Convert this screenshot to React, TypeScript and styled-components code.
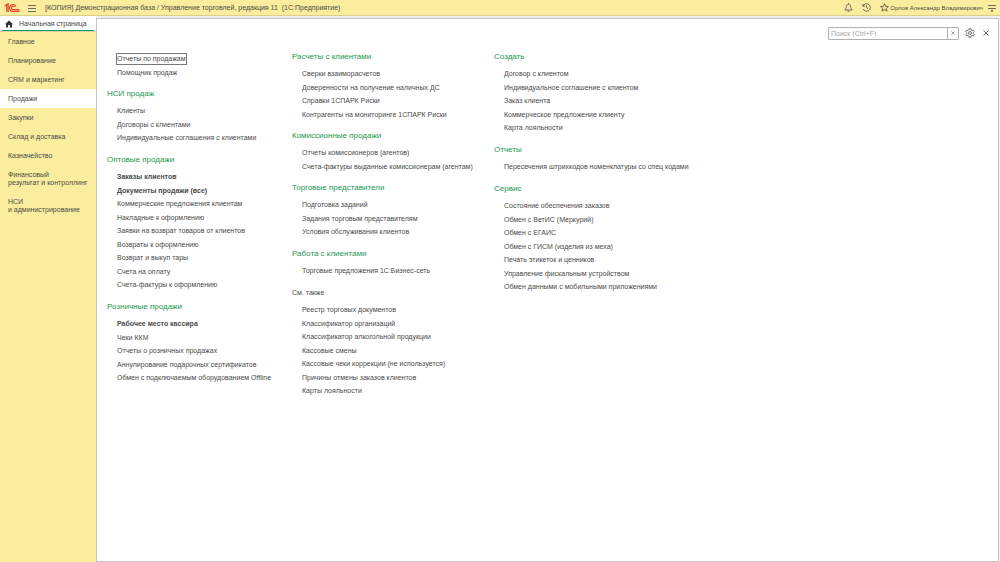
import React from "react";
import styled, { createGlobalStyle, css } from "styled-components";

const GlobalStyle = createGlobalStyle`
  * { box-sizing: border-box; }
  body {
    margin: 0;
    background: #f0f0f0;
    color: #4a4a4a;
    font: 7px/14px "Liberation Sans", Arial, sans-serif;
  }
  ul { list-style: none; margin: 0; padding: 0; }
  a { color: inherit; text-decoration: none; }
  button { padding: 0; border: 0; background: none; color: inherit; font: inherit; cursor: pointer; }
`;

const Shell = styled.div`
  display: flex;
  flex-direction: column;
  min-height: 100vh;
`;

const TitleBar = styled.header`
  display: flex;
  align-items: center;
  height: 16px;
  padding: 0 3px 0 4px;
  background: #fbed9e;
  border-bottom: 1px solid #dccf8c;
`;

const Title = styled.h1`
  flex: 1;
  margin: 0 0 0 8px;
  font-size: 7px;
  line-height: 14px;
  font-weight: 400;
  white-space: pre;
`;

const Tools = styled.div`
  display: flex;
  align-items: center;
  gap: 8px;
`;

const IconButton = styled.button`
  display: grid;
  place-items: center;
  width: 10px;
  height: 14px;
  svg { display: block; }
`;

const MenuButton = styled(IconButton)`
  margin-left: 7px;
`;

const UserArea = styled.div`
  display: flex;
  align-items: center;
  gap: 4px;
  margin-left: -7px;
`;

const UserLink = styled.a`
  font-size: 6px;
  white-space: nowrap;
`;

const Body = styled.div`
  display: flex;
  flex: 1;
`;

const Sidebar = styled.aside`
  flex: none;
  width: 96px;
  background: #fbed9e;
`;

const HomeTab = styled.a`
  display: block;
  height: 16px;
  padding: 0 2px;
  background: #fff;
  border-bottom: 1px solid #d5d0b0;
`;

const HomeInner = styled.span`
  display: flex;
  align-items: center;
  gap: 6px;
  height: 15px;
  padding: 1px 3px 0;
  border-bottom: 1px solid #0f9d58;
  white-space: nowrap;
`;

const SectionLink = styled.a<{ $active?: boolean }>`
  display: block;
  padding: 6px 8px 5px;
  line-height: 8px;
  white-space: pre-line;
  background: ${(p) => (p.$active ? "#fff" : "transparent")};
`;

const Panel = styled.main`
  flex: 1;
  margin: 2px 1px 0 0;
  padding: 7px 7px 0 10px;
  background: #fff;
  border: 1px solid #c4c4c4;
`;

const PanelBar = styled.div`
  display: flex;
  justify-content: flex-end;
  align-items: center;
  gap: 6px;
`;

const SearchBox = styled.div`
  display: flex;
  width: 131px;
  height: 13px;
  border: 1px solid #b0b0b0;
  border-radius: 1px;
`;

const SearchInput = styled.input`
  flex: 1;
  min-width: 0;
  padding: 1px 2px 0;
  border: 0;
  outline: 0;
  font: inherit;
  line-height: 10px;
  &::placeholder { color: #a8a8a8; opacity: 1; }
`;

const ClearButton = styled.button`
  width: 11px;
  border-left: 1px solid #b0b0b0;
  display: grid;
  place-items: center;
`;

const Columns = styled.div`
  display: grid;
  grid-template-columns: 185px 202px auto;
  padding-top: 10px;
`;

const Group = styled.section`
  margin-bottom: 8px;
`;

const GroupTitle = styled.h2<{ $muted?: boolean }>`
  margin: 0 0 3px;
  font-size: 8px;
  line-height: 14px;
  font-weight: 400;
  color: #1a9850;
  ${(p) => p.$muted && css`font-size: 7px; color: #4a4a4a;`}
`;

const Items = styled.ul`
  padding-left: 10px;
  &:first-child { padding-top: 2px; }
`;

const Item = styled.li`
  height: 14px;
  white-space: nowrap;
  &:nth-child(even) { height: 13px; }
`;

const ItemLink = styled.a<{ $bold?: boolean; $focused?: boolean }>`
  font-weight: ${(p) => (p.$bold ? 700 : 400)};
  ${(p) => p.$focused && css`
    display: inline-block;
    line-height: 10px;
    outline: 1px solid #777;
  `}
`;

type GroupData = { title?: string; muted?: boolean; bold?: number; focusFirst?: boolean; items: string[] };

const columns: GroupData[][] = [
  [
    { focusFirst: true, items: ["Отчеты по продажам", "Помощник продаж"] },
    { title: "НСИ продаж", items: ["Клиенты", "Договоры с клиентами", "Индивидуальные соглашения с клиентами"] },
    {
      title: "Оптовые продажи",
      bold: 2,
      items: [
        "Заказы клиентов",
        "Документы продажи (все)",
        "Коммерческие предложения клиентам",
        "Накладные к оформлению",
        "Заявки на возврат товаров от клиентов",
        "Возвраты к оформлению",
        "Возврат и выкуп тары",
        "Счета на оплату",
        "Счета-фактуры к оформлению",
      ],
    },
    {
      title: "Розничные продажи",
      bold: 1,
      items: [
        "Рабочее место кассира",
        "Чеки ККМ",
        "Отчеты о розничных продажах",
        "Аннулирование подарочных сертификатов",
        "Обмен с подключаемым оборудованием Offline",
      ],
    },
  ],
  [
    {
      title: "Расчеты с клиентами",
      items: [
        "Сверки взаиморасчетов",
        "Доверенности на получение наличных ДС",
        "Справки 1СПАРК Риски",
        "Контрагенты на мониторинге 1СПАРК Риски",
      ],
    },
    {
      title: "Комиссионные продажи",
      items: ["Отчеты комиссионеров (агентов)", "Счета-фактуры выданные комиссионерам (агентам)"],
    },
    {
      title: "Торговые представители",
      items: ["Подготовка заданий", "Задания торговым представителям", "Условия обслуживания клиентов"],
    },
    { title: "Работа с клиентами", items: ["Торговые предложения 1С:Бизнес-сеть"] },
    {
      title: "См. также",
      muted: true,
      items: [
        "Реестр торговых документов",
        "Классификатор организаций",
        "Классификатор алкогольной продукции",
        "Кассовые смены",
        "Кассовые чеки коррекции (не используется)",
        "Причины отмены заказов клиентов",
        "Карты лояльности",
      ],
    },
  ],
  [
    {
      title: "Создать",
      items: [
        "Договор с клиентом",
        "Индивидуальное соглашение с клиентом",
        "Заказ клиента",
        "Коммерческое предложение клиенту",
        "Карта лояльности",
      ],
    },
    { title: "Отчеты", items: ["Пересечения штрихкодов номенклатуры со спец кодами"] },
    {
      title: "Сервис",
      items: [
        "Состояние обеспечения заказов",
        "Обмен с ВетИС (Меркурий)",
        "Обмен с ЕГАИС",
        "Обмен с ГИСМ (изделия из меха)",
        "Печать этикеток и ценников",
        "Управление фискальным устройством",
        "Обмен данными с мобильными приложениями",
      ],
    },
  ],
];

const sections = [
  "Главное",
  "Планирование",
  "CRM и маркетинг",
  "Продажи",
  "Закупки",
  "Склад и доставка",
  "Казначейство",
  "Финансовый\nрезультат и контроллинг",
  "НСИ\nи администрирование",
];

const stroke = { fill: "none", stroke: "#4a4a4a", strokeWidth: 0.8 };

const Logo = () => (
  <svg width="16" height="10" viewBox="0 0 16 10" fill="none" stroke="#e0402a" strokeWidth="1.1" role="img" aria-label="1C">
    <path d="M0.5 3.4 L2.8 1.4 V9 M4.2 9 V0.8 L2.8 1.6" />
    <path d="M12 3.4 A3.4 3.4 0 1 0 9 8.4 H15.5" />
    <path d="M10.5 3.8 A1.7 1.7 0 1 0 9 6.6 H15.5" />
  </svg>
);

const Burger = () => (
  <svg width="8" height="8" viewBox="0 0 8 8" {...stroke}>
    <path d="M0 1.5H8M0 4.5H8M0 7.5H8" />
  </svg>
);

const Bell = () => (
  <svg width="9" height="9" viewBox="0 0 9 9" {...stroke}>
    <path d="M0.8 7H8.2C6.9 5.8 7 5 6.7 3.3C6.4 1.8 5.6 1.2 4.5 1.2S2.6 1.8 2.3 3.3C2 5 2.1 5.8 0.8 7ZM3.6 8.3H5.4M4.5 0.2V1.2" />
  </svg>
);

const History = () => (
  <svg width="9" height="9" viewBox="0 0 9 9" {...stroke}>
    <path d="M1.2 3A3.7 3.7 0 1 1 1.2 6M0.9 1V3.2H3M4.6 2.4V4.7L6.2 5.6" />
  </svg>
);

const Star = () => (
  <svg width="9" height="9" viewBox="0 0 9 9" {...stroke}>
    <path d="M4.5 0.7L5.6 3.3L8.4 3.5L6.3 5.3L7 8.1L4.5 6.6L2 8.1L2.7 5.3L0.6 3.5L3.4 3.3Z" />
  </svg>
);

const Settings = () => (
  <svg width="8" height="8" viewBox="0 0 8 8" {...stroke}>
    <path d="M0 1.5H8M0 4.5H8" />
    <path d="M2.4 6.2H5.6L4 7.9Z" fill="#4a4a4a" stroke="none" />
  </svg>
);

const Home = () => (
  <svg width="8" height="8" viewBox="0 0 8 8" fill="#333">
    <path d="M4 0.5L8 4.2H7V7.5H4.9V5H3.1V7.5H1V4.2H0Z" />
  </svg>
);

const Gear = () => (
  <svg width="10" height="10" viewBox="0 0 24 24" fill="none" stroke="#555" strokeWidth="2">
    <path d="M10 1.5H14L14.8 4.8L17 6.1L20.3 5.1L22.3 8.6L19.9 11V13L22.3 15.4L20.3 18.9L17 17.9L14.8 19.2L14 22.5H10L9.2 19.2L7 17.9L3.7 18.9L1.7 15.4L4.1 13V11L1.7 8.6L3.7 5.1L7 6.1L9.2 4.8Z" />
    <circle cx="12" cy="12" r="3.5" />
  </svg>
);

const Cross = ({ size }: { size: number }) => (
  <svg width={size} height={size} viewBox="0 0 6 6" {...stroke}>
    <path d="M0.5 0.5L5.5 5.5M5.5 0.5L0.5 5.5" />
  </svg>
);

const MenuGroup = ({ title, muted, bold = 0, focusFirst, items }: GroupData) => (
  <Group>
    {title && <GroupTitle $muted={muted}>{title}</GroupTitle>}
    <Items>
      {items.map((text, i) => (
        <Item key={text}>
          <ItemLink href="#" $bold={i < bold} $focused={focusFirst && i === 0}>{text}</ItemLink>
        </Item>
      ))}
    </Items>
  </Group>
);

export default function App() {
  return (
    <Shell>
      <GlobalStyle />
      <TitleBar>
        <Logo />
        <MenuButton aria-label="Меню"><Burger /></MenuButton>
        <Title>{"[КОПИЯ] Демонстрационная база / Управление торговлей, редакция 11  (1С:Предприятие)"}</Title>
        <Tools>
          <IconButton aria-label="Уведомления"><Bell /></IconButton>
          <IconButton aria-label="История"><History /></IconButton>
          <IconButton aria-label="Избранное"><Star /></IconButton>
          <UserArea>
            <UserLink href="#">Орлов Александр Владимирович</UserLink>
            <IconButton aria-label="Настройки окна"><Settings /></IconButton>
          </UserArea>
        </Tools>
      </TitleBar>
      <Body>
        <Sidebar>
          <HomeTab href="#">
            <HomeInner>
              <Home />
              Начальная страница
            </HomeInner>
          </HomeTab>
          <nav>
            {sections.map((s) => (
              <SectionLink key={s} href="#" $active={s === "Продажи"}>{s}</SectionLink>
            ))}
          </nav>
        </Sidebar>
        <Panel>
          <PanelBar>
            <SearchBox>
              <SearchInput aria-label="Поиск" placeholder="Поиск (Ctrl+F)" />
              <ClearButton aria-label="Очистить"><Cross size={4} /></ClearButton>
            </SearchBox>
            <IconButton aria-label="Настройка"><Gear /></IconButton>
            <IconButton aria-label="Закрыть"><Cross size={6} /></IconButton>
          </PanelBar>
          <Columns>
            {columns.map((groups, i) => (
              <div key={i}>
                {groups.map((g) => <MenuGroup key={g.title ?? "top"} {...g} />)}
              </div>
            ))}
          </Columns>
        </Panel>
      </Body>
    </Shell>
  );
}
